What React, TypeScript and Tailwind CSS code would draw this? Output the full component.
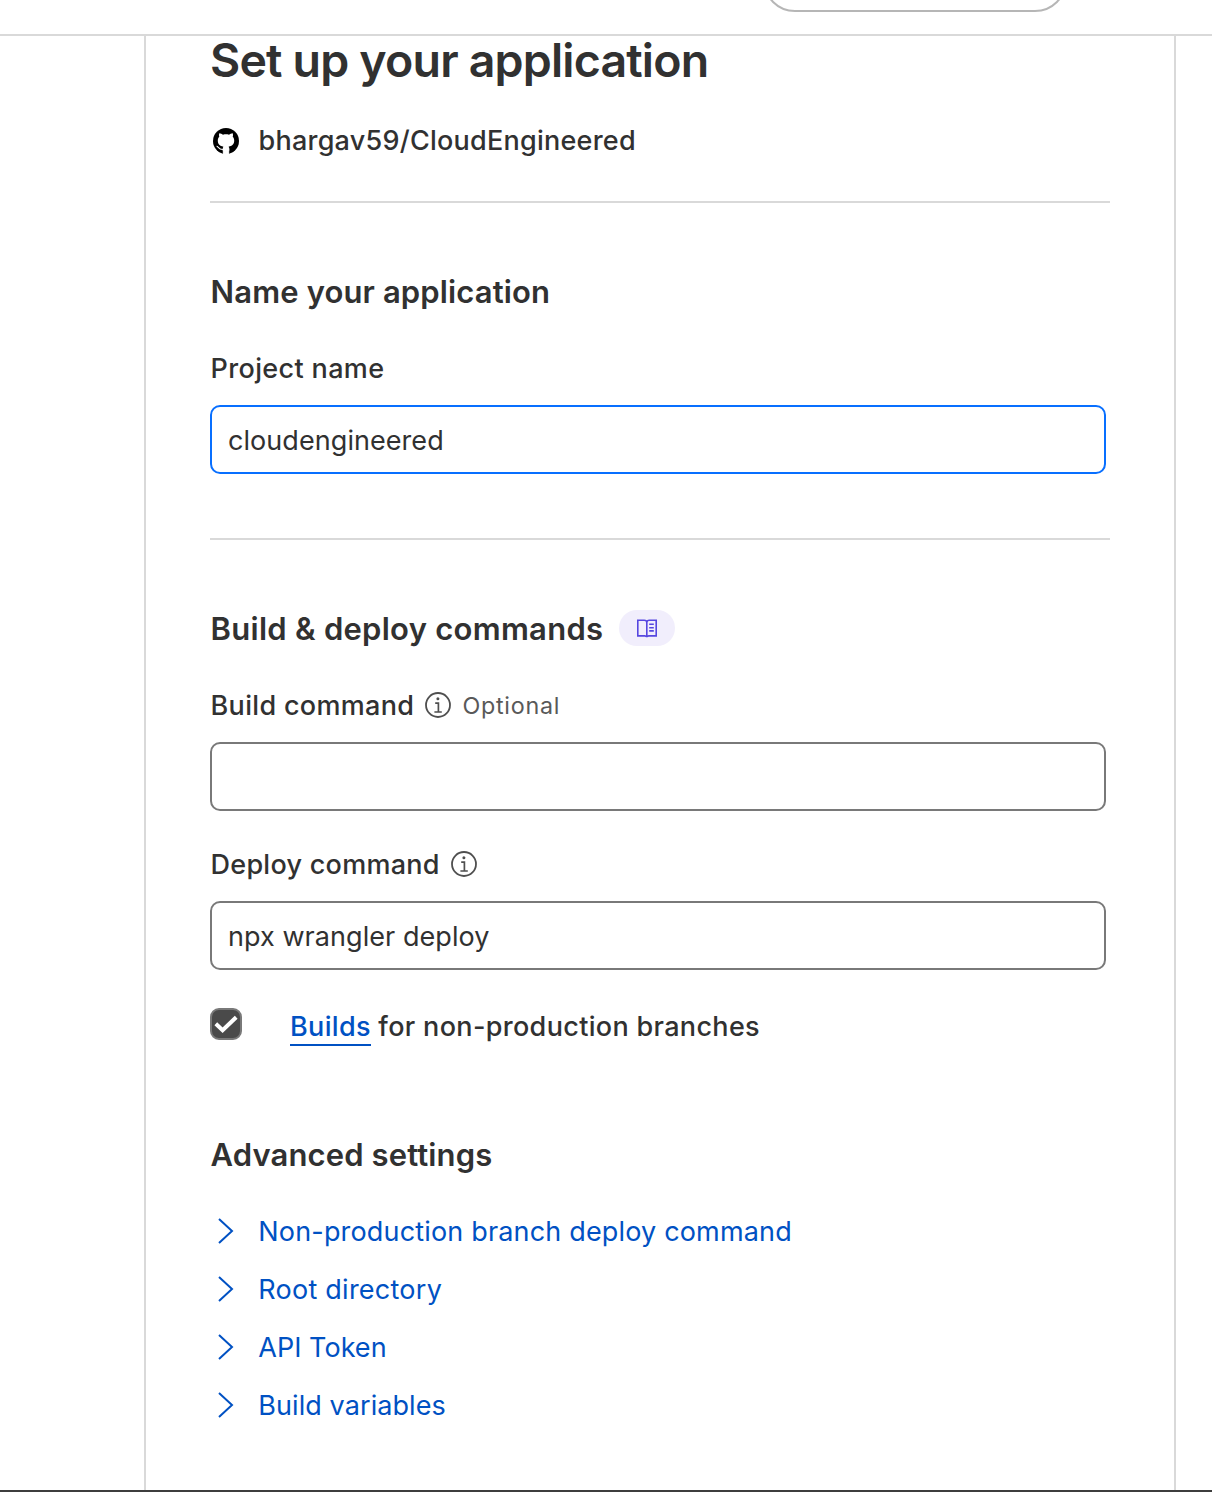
import type { ReactNode } from 'react';

function InfoIcon() {
  return (
    <svg className="size-[26px] shrink-0 text-[#4f4f4f]" viewBox="0 0 26 26" fill="none" stroke="currentColor">
      <circle cx="13" cy="13" r="12" strokeWidth="1.8" />
      <path d="M10.2 11.1h3.2v8.4M9.4 20h7.4" strokeWidth="1.7" />
      <circle cx="12.9" cy="6.7" r="1.5" fill="currentColor" stroke="none" />
    </svg>
  );
}

function GithubIcon() {
  return (
    <svg className="size-[26px] shrink-0" viewBox="0 0 26 26">
      <circle cx="13" cy="13" r="13" fill="black" />
      <path
        d="M6.3 5.2C7.700 5.200 9 6 10 6.700C12 6.200 14 6.200 16 6.700C17 6 18.300 5.200 19.700 5.200C20.100 6.400 20.100 7.700 19.700 8.700C20.800 9.800 21.200 11 21.200 12.600C21.200 16.600 19 18.200 15.600 18.700C16.200 19.400 16.400 20.200 16.400 21.200V26.500H9.600V21.200C9.600 20.200 9.800 19.400 10.400 18.700C7 18.200 4.800 16.600 4.800 12.600C4.800 11 5.200 9.800 6.300 8.700C5.900 7.700 5.900 6.400 6.300 5.200Z"
        fill="white"
      />
      <path d="M3.6 18.300C5.400 18.400 5.600 21.800 9.900 21.500" fill="none" stroke="white" strokeWidth="1.1" />
      <path d="M9.600 22.700V25.600M16.400 22.700V25.600" stroke="black" strokeWidth="0.6" />
    </svg>
  );
}

function BookIcon() {
  return (
    <svg className="h-5 w-[22px] text-[#5647e0]" viewBox="0 0 22 20" fill="none" stroke="currentColor" strokeWidth="1.6">
      <path d="M1.8 2.200h6.400c1.600 0 2.600.8 2.600 2.200v14.600c-.4-.8-1-1.100-2-1.100h-7zM10.800 4.400c0-1.400 1-2.200 2.600-2.200h6.800v15.700h-7.400c-1 0-1.600.3-2 1.100" />
      <path d="M13.200 6.300h4.600M13.200 9.700h4.600M13.200 12.900h4.600" />
    </svg>
  );
}

function Heading({ children }: { children: ReactNode }) {
  return <h2 className="pl-[0.6px] text-[31px] leading-10 font-semibold whitespace-nowrap">{children}</h2>;
}

function Label({ children }: { children: ReactNode }) {
  return <span className="block pl-[0.5px] text-[27px] leading-10 font-[450] whitespace-nowrap">{children}</span>;
}

const inputBase = 'block h-[69px] w-[896px] rounded-[10px] border-2 bg-white px-4 pt-0.5 text-[27px] tracking-[0.06px] outline-none';

const advanced = [
  { title: 'Non-production branch deploy command', tracking: 'tracking-[0.17px]' },
  { title: 'Root directory', tracking: 'tracking-[0.25px]' },
  { title: 'API Token', tracking: 'tracking-[0.02px]' },
  { title: 'Build variables', tracking: 'tracking-[0.08px]' },
];

export default function App() {
  return (
    <div className="flex h-[1492px] w-[1212px] flex-col overflow-hidden border-b-2 border-[#3d3d3d] bg-white font-['Inter',sans-serif] text-[#313131]">
      <header className="flex h-9 shrink-0 items-end border-b-2 border-[#d9d9d9] pb-[22px] pl-[763px]">
        <button className="h-16 w-[304px] shrink-0 rounded-full border-2 border-[#b6b6b6]" aria-label="Account" />
      </header>

      <main className="ml-36 w-[1032px] grow border-x-2 border-[#d9d9d9] px-16">
        <h1 className="text-[46.5px] leading-[48px] font-semibold tracking-[-0.82px] whitespace-nowrap">Set up your application</h1>
        <div className="mt-[37px] flex h-10 items-center gap-[19px] pl-[3px] tracking-[0.24px]">
          <GithubIcon />
          <Label>bhargav59/CloudEngineered</Label>
        </div>
        <hr className="mt-10 border-t-2 border-[#d9d9d9]" />

        <section className="mt-[69px]">
          <div className="tracking-[0.13px]"><Heading>Name your application</Heading></div>
          <div className="mt-[37px] h-[39px] tracking-[0.36px]"><Label>Project name</Label></div>
          <input className={`${inputBase} mt-[17px] border-[#086fff]`} defaultValue="cloudengineered" />
        </section>
        <hr className="mt-16 border-t-2 border-[#d9d9d9]" />

        <section className="mt-[69px]">
          <div className="flex h-10 items-center gap-4 tracking-[0.27px]">
            <Heading>Build &amp; deploy commands</Heading>
            <span className="mb-0.5 flex h-9 w-14 items-center justify-center rounded-full bg-[#f1eefc]"><BookIcon /></span>
          </div>
          <div className="mt-9 flex h-10 items-center">
            <div className="pt-0.5 tracking-[0.33px]"><Label>Build command</Label></div>
            <span className="ml-[11px] flex"><InfoIcon /></span>
            <span className="ml-[11px] pt-0.5 text-[23.3px] tracking-[0.75px] text-[#595959]">Optional</span>
          </div>
          <input className={`${inputBase} mt-[17px] border-[#797979]`} />
          <div className="mt-[33px] flex h-10 items-center gap-[11px]">
            <div className="pt-0.5 tracking-[0.27px]"><Label>Deploy command</Label></div>
            <InfoIcon />
          </div>
          <input className={`${inputBase} mt-[17px] border-[#797979]`} defaultValue="npx wrangler deploy" />
          <div className="mt-[38px] flex h-10 items-start">
            <span className="flex size-8 items-center justify-center rounded-[9px] border-2 border-[#797979] bg-[#4a4a4a]">
              <svg className="h-5 w-6" viewBox="0 0 24 20" fill="none" stroke="white" strokeWidth="4">
                <path d="M1.8 9.8l6.8 6.4L22.2 3.2" />
              </svg>
            </span>
            <div className="ml-12 flex text-[27px] leading-[38px] font-[450] tracking-[0.33px] whitespace-pre">
              <a className="h-[38px] border-b-2 border-[#0051c3] text-[#0051c3]">Builds</a>
              <span> for non-production branches</span>
            </div>
          </div>
        </section>

        <section className="mt-[87px]">
          <div className="tracking-[0.12px]"><Heading>Advanced settings</Heading></div>
          <ul className="mt-[27px] text-[#0051c3]">
            {advanced.map(({ title, tracking }) => (
              <li key={title} className="flex h-[58px] items-center gap-6 pl-[7px]">
                <svg className="h-[26px] w-[17px] shrink-0" viewBox="0 0 17 26" fill="none" stroke="currentColor" strokeWidth="2">
                  <path d="M2 1l13 12L2 25" />
                </svg>
                <span className={`pt-0.5 pl-[0.3px] text-[27px] leading-10 whitespace-nowrap ${tracking}`}>{title}</span>
              </li>
            ))}
          </ul>
        </section>
      </main>
    </div>
  );
}
